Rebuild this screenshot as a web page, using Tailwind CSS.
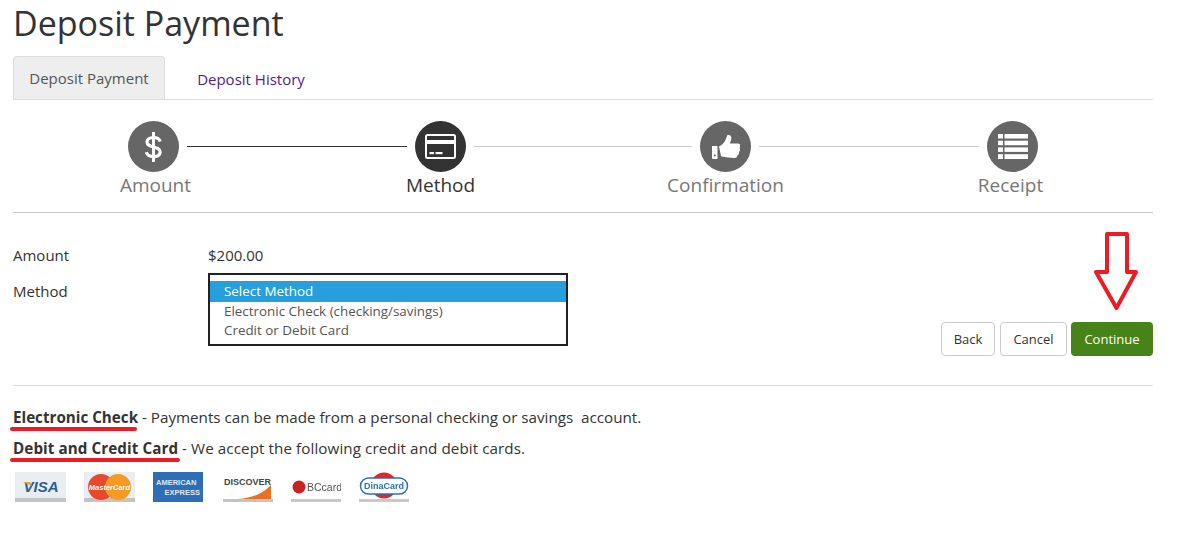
<!DOCTYPE html>
<html lang="en">
  <head>
    <meta charset="UTF-8" />
    <title>Deposit Payment</title>
    <script src="https://cdn.jsdelivr.net/npm/@tailwindcss/browser@4"></script>
  </head>
  <body class="bg-white font-['Open_Sans',sans-serif] text-[#333]">
    <main class="relative ml-[13px] w-[1140px]">
      <h1 class="h-[56px] pt-[3px] text-[34px] leading-[40px] text-[#333]">Deposit Payment</h1>

      <!-- tabs -->
      <nav class="flex h-[44px] border-b border-[#ddd] text-[15px]">
        <a class="flex w-[152px] items-center justify-center rounded-t border border-b-0 border-[#ddd] bg-[#eee] pt-[1px] text-[#555]">Deposit Payment</a>
        <a class="flex w-[172px] items-center justify-center pt-[3px] text-[#551a8b]">Deposit History</a>
      </nav>

      <!-- steps -->
      <section class="grid h-[113px] grid-cols-4 border-b border-[#ccc] pt-[21px]">
        <div class="relative flex flex-col items-center">
          <div class="mr-[4px] flex h-[51px] w-[51px] items-center justify-center rounded-full bg-[#666]">
            <svg width="17" height="30" viewBox="0 0 17 30" fill="none" stroke="#fff" stroke-width="3.200">
              <path d="M8.500 0v30" stroke-width="3" />
              <path d="M15.200 9.500C14.500 6.800 12 5.500 8.500 5.500 4.500 5.500 2 7.300 2 10c0 6.500 13.200 3.500 13.200 10 0 2.800-2.700 4.600-6.700 4.600-3.700 0-6.300-1.400-7.200-4.400" />
            </svg>
          </div>
          <span class="text-[19px] leading-[26px] text-[#777]">Amount</span>
          <div class="absolute left-[174px] top-[25px] h-px w-[220px] bg-[#333]"></div>
        </div>
        <div class="relative flex flex-col items-center">
          <div class="flex h-[51px] w-[51px] items-center justify-center rounded-full bg-[#333]">
            <svg width="31" height="25" viewBox="0 0 31 25">
              <rect x="1" y="1" width="29" height="23" rx="1.500" fill="none" stroke="#fff" stroke-width="2" />
              <rect x="1" y="6" width="29" height="4" fill="#fff" />
              <rect x="4.500" y="18" width="4.500" height="2.200" fill="#fff" />
              <rect x="10.500" y="18" width="7" height="2.200" fill="#fff" />
            </svg>
          </div>
          <span class="text-[19px] leading-[26px] text-[#333]">Method</span>
          <div class="absolute left-[176px] top-[25px] h-px w-[218px] bg-[#ccc]"></div>
        </div>
        <div class="relative flex flex-col items-center">
          <div class="flex h-[51px] w-[51px] items-center justify-center rounded-full bg-[#666]">
            <svg width="28" height="24" viewBox="0 0 28 24" fill="#fff">
              <path d="M0 11h5.500v13H1a1 1 0 0 1-1-1z" />
              <path d="M7 11.500c2.500-1 5-3.500 6.500-6.500.8-1.700 1.200-3.500 2-5 2.500-.5 4 1 3.800 3.500-.1 2-1 3.500-1.500 5h8c1.500 0 2.700 1 2.700 2.400 0 1-.5 1.700-1.100 2.200.6.600.8 1.200.7 2-.1.800-.6 1.400-1.200 1.800.3.700.3 1.400 0 2-.3.600-.8 1.100-1.500 1.400 0 1.500-1.200 2.700-3 2.700-4.500 0-8.500-.8-13.400-1.700z" />
              <circle cx="2.800" cy="20.500" r="1" fill="#666" />
            </svg>
          </div>
          <span class="text-[19px] leading-[26px] text-[#777]">Confirmation</span>
          <div class="absolute left-[176px] top-[25px] h-px w-[220px] bg-[#ccc]"></div>
        </div>
        <div class="flex flex-col items-center">
          <div class="ml-[4px] flex h-[51px] w-[51px] items-center justify-center rounded-full bg-[#666]">
            <svg width="30" height="25" viewBox="0 0 30 25" fill="#fff">
              <rect x="0" y="0" width="5" height="4.500" />
              <rect x="6.500" y="0" width="23.500" height="4.500" />
              <rect x="0" y="6.700" width="5" height="4.500" />
              <rect x="6.500" y="6.700" width="23.500" height="4.500" />
              <rect x="0" y="13.400" width="5" height="4.500" />
              <rect x="6.500" y="13.400" width="23.500" height="4.500" />
              <rect x="0" y="20.200" width="5" height="4.800" />
              <rect x="6.500" y="20.200" width="23.500" height="4.800" />
            </svg>
          </div>
          <span class="text-[19px] leading-[26px] text-[#777]">Receipt</span>
        </div>
      </section>

      <!-- form -->
      <section class="flex h-[173px] justify-between border-b border-[#ddd] pt-[31px] text-[15px]">
        <div class="grid grid-cols-[195px_360px] content-start">
          <span class="leading-[22px]">Amount</span>
          <span class="leading-[22px]">$200.00</span>
          <span class="mt-[14px] leading-[22px]">Method</span>
          <div class="mt-[7px] h-[73px] border-2 border-[#222] pt-[6px] text-[13.400px] leading-[19.500px] text-[#555]">
            <div class="bg-[#269fdc] pl-[14px] pt-[1px] text-white">Select Method</div>
            <div class="pl-[14px]">Electronic Check (checking/savings)</div>
            <div class="pl-[14px]">Credit or Debit Card</div>
          </div>
        </div>
        <div class="mt-[78px] flex h-[34px] gap-[4px] text-[13px]">
          <button class="w-[54px] rounded border border-[#ccc] bg-white pt-[1px]">Back</button>
          <button class="ml-[1px] w-[67px] rounded border border-[#ccc] bg-white pt-[1px]">Cancel</button>
          <button class="w-[82px] rounded bg-[#46841a] pt-[1px] text-white">Continue</button>
        </div>
      </section>

      <!-- annotation arrow -->
      <svg class="absolute left-[1080px] top-[230px]" width="46" height="84" viewBox="0 0 46 84" fill="none" stroke="#ed1c24" stroke-width="4" stroke-linejoin="round">
        <path d="M14 4h20v38h9L23.500 78 3 42h11z" />
      </svg>

      <!-- notes -->
      <section class="pt-[19px] text-[15.200px] leading-[24px]">
        <p>
          <b class="relative font-bold">Electronic Check<span class="absolute -left-[3px] top-[20px] h-[4px] w-[127px] rounded-full bg-[#ed1c24]"></span></b>
          - Payments can be made from a personal checking or savings &nbsp;account.
        </p>
        <p class="mt-[7px] tracking-[0.08px]">
          <b class="relative font-bold">Debit and Credit Card<span class="absolute -left-[3px] top-[20px] h-[4px] w-[170px] rounded-full bg-[#ed1c24]"></span></b>
          - We accept the following credit and debit cards.
        </p>
      </section>

      <!-- card logos -->
      <div class="mt-[12px] flex gap-[18px] blur-[0.6px]">
        <svg width="51" height="30" viewBox="0 0 51 30" class="ml-[2px]">
          <rect width="51" height="30" fill="#e9eef3" />
          <rect y="26" width="51" height="4" fill="#c4c4c4" />
          <text x="26" y="20" text-anchor="middle" font-family="Liberation Sans" font-size="15" font-weight="700" font-style="italic" fill="#2a5f95">VISA</text>
          <path d="M8 10h7l2 4z" fill="#e8a33d" />
        </svg>
        <svg width="51" height="30" viewBox="0 0 51 30">
          <rect width="51" height="30" fill="#e9eef3" />
          <rect y="26" width="51" height="4" fill="#c4c4c4" />
          <circle cx="17" cy="15" r="13" fill="#e8492c" />
          <circle cx="34" cy="15" r="13" fill="#f59a23" />
          <text x="25.500" y="17.500" text-anchor="middle" font-family="Liberation Sans" font-size="7.500" font-weight="700" font-style="italic" fill="#fff">MasterCard</text>
        </svg>
        <svg width="50" height="30" viewBox="0 0 50 30">
          <rect width="50" height="30" fill="#2f6db5" />
          <text x="3" y="13" font-family="Liberation Sans" font-size="7.500" font-weight="700" fill="#dfe9f5">AMERICAN</text>
          <text x="47" y="23" text-anchor="end" font-family="Liberation Sans" font-size="7.500" font-weight="700" fill="#dfe9f5">EXPRESS</text>
        </svg>
        <svg width="50" height="30" viewBox="0 0 50 30" class="ml-[2px]">
          <rect width="50" height="30" fill="#fff" />
          <path d="M15 27c14-1 26-6 33-14v14z" fill="#e8701f" />
          <rect y="27" width="50" height="3" fill="#c4c4c4" />
          <text x="1" y="13" font-family="Liberation Sans" font-size="9" font-weight="700" fill="#444">DISCOVER</text>
        </svg>
        <svg width="50" height="30" viewBox="0 0 50 30">
          <rect y="27" width="50" height="3" fill="#c9c9c9" />
          <circle cx="8" cy="15" r="6.500" fill="#c8231f" />
          <text x="16" y="19" font-family="Liberation Sans" font-size="10.500" fill="#555">BCcard</text>
        </svg>
        <svg width="50" height="30" viewBox="0 0 50 30">
          <rect y="27" width="50" height="3" fill="#c9c9c9" />
          <ellipse cx="25" cy="13.500" rx="13" ry="13" fill="#e5232a" />
          <rect x="1.500" y="6" width="47" height="16" rx="8" fill="#fff" stroke="#2e6fb7" stroke-width="1.500" />
          <text x="25" y="17" text-anchor="middle" font-family="Liberation Sans" font-size="9" font-weight="700" fill="#2e6fb7">DinaCard</text>
        </svg>
      </div>
    </main>
  </body>
</html>
